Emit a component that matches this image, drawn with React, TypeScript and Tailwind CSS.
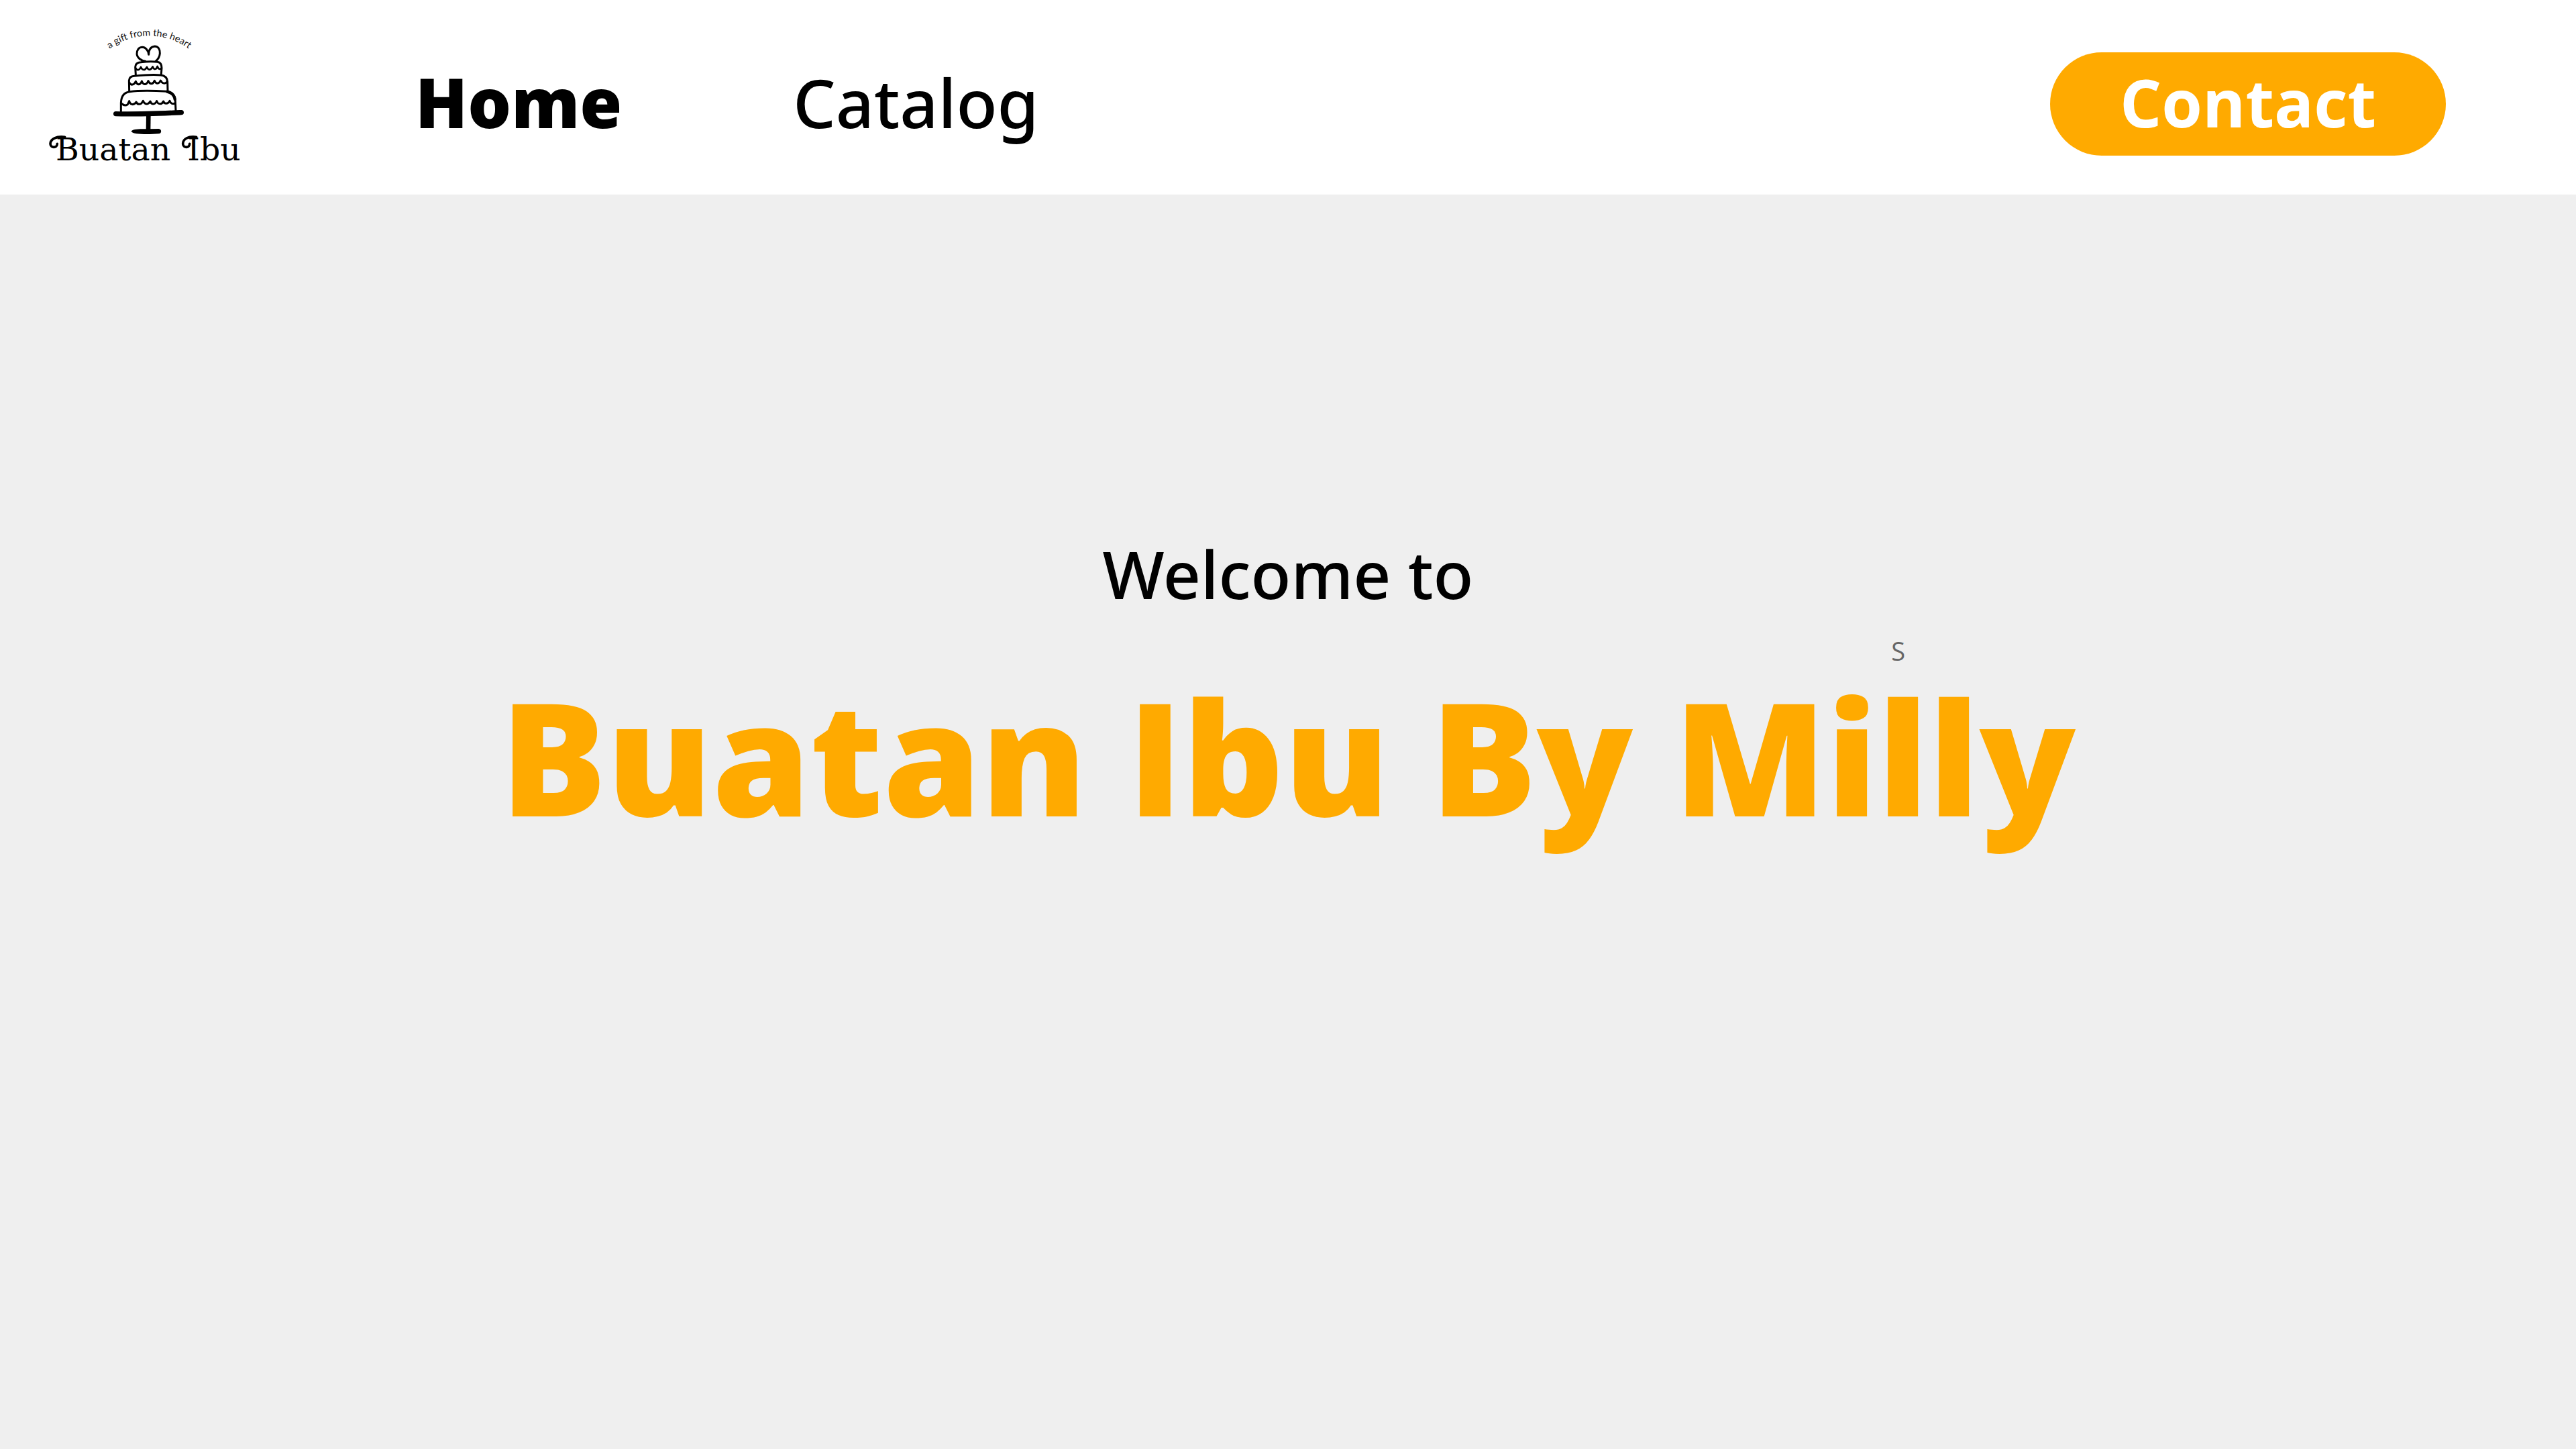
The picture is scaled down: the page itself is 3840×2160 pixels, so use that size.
function Logo() {
  return (
    <svg viewBox="48 30 900 690" className="h-[230px] w-[300px]" role="img" aria-label="Buatan Ibu, a gift from the heart">
      <defs>
        <path id="tagline-arc" d="M322 173A298 298 0 0 1 712 173" />
      </defs>
      <text fill="#111" className="font-['Lato'] text-[43px]" textAnchor="middle">
        <textPath href="#tagline-arc" startOffset="50%">a gift from the heart</textPath>
      </text>
      <g fill="none" stroke="#000" strokeLinecap="round" strokeLinejoin="round">
        {/* heart topper */}
        <path strokeWidth="9" d="M515 184C513 165 501 152 487 151C470 151 461 165 462 182C464 199 480 211 500 214M515 184C514 164 524 148 542 147C559 147 566 162 565 179C564 194 556 206 546 214" />
        {/* tiers */}
        <path strokeWidth="9" d="M457 274L455 240C455 226 464 219 480 218C505 215 535 214 554 217C568 219 573 230 573 244L571 271" />
        <path strokeWidth="9" d="M428 347L427 300C428 287 434 281 450 280C490 276 535 273 568 276C590 278 598 289 599 305L600 345" />
        <path strokeWidth="9" d="M391 438L391 400C392 368 405 353 430 350C480 344 545 346 595 349C622 352 633 366 634 392L636 434" />
        <path strokeWidth="13" d="M598 350C618 354 629 364 632 384" />
        {/* icing */}
        <path strokeWidth="8" d="M458 246C462 255 472 257 480 240C487 256 498 256 507 240C514 256 524 255 533 238C538 253 548 253 554 237C558 249 565 252 571 246" />
        <path strokeWidth="9" d="M429 310C435 322 449 322 457 304C463 322 477 322 484 303C492 322 505 321 513 302C520 319 534 318 541 301C548 317 561 316 568 300C576 315 589 316 597 306" />
        <path strokeWidth="9" d="M395 404C402 411 412 413 421 407L428 392C432 410 450 412 459 396C466 411 482 409 490 391C496 409 513 409 522 393C527 409 544 409 551 392C556 408 573 409 581 393C585 406 601 407 609 391C613 404 624 407 633 401" />
        {/* cake stand */}
        <path strokeWidth="22" d="M368 449C460 452 570 447 661 443" />
        <path strokeWidth="20" strokeLinecap="butt" d="M514 450L513 525" />
      </g>
      <path d="M437 528C440 516 475 516 512 517L560 516C574 517 574 538 560 538C520 541 445 543 437 528Z" />
      <text x="99" y="658" className="font-['DejaVu_Serif'] text-[142px]">Buatan</text>
      <text x="688" y="658" className="font-['DejaVu_Serif'] text-[142px]">Ibu</text>
      {/* flourishes beside the capitals */}
      <g fill="none" stroke="#000" strokeWidth="11" strokeLinecap="round">
        <path d="M140 553C104 548 75 561 75 583C76 603 106 603 106 583" />
        <path d="M728 553C694 548 668 561 668 583C669 603 698 603 698 583" />
      </g>
    </svg>
  );
}

export default function App() {
  return (
    <div className="flex min-h-screen flex-col bg-[#efefef] font-['Open_Sans',sans-serif] text-black">
      <header className="flex h-[290px] items-center bg-white pr-[194px] pl-[66px]">
        <a href="#home" className="shrink-0">
          <Logo />
        </a>
        <nav className="mt-[14px] ml-[253px] flex items-baseline gap-[255px] leading-none">
          <a href="#home" className="text-[102px] font-extrabold">Home</a>
          <a href="#catalog" className="font-['Noto_Sans',sans-serif] text-[100px] font-medium">Catalog</a>
        </nav>
        <button
          type="button"
          className="mt-5 ml-auto h-[154px] w-[590px] rounded-full bg-[#ffaa00] pb-[6px] text-[98px] leading-none font-bold text-white"
        >
          Contact
        </button>
      </header>
      <main className="flex flex-1 flex-col items-center pt-[497px]">
        <p className="font-['Noto_Sans',sans-serif] text-[98px] leading-[136px] font-medium">Welcome to</p>
        <div className="mt-5">
          <p className="pr-[254px] text-right text-[38px] leading-[54px] text-[#666]">S</p>
          <h1 className="mt-3 text-[235px] leading-none font-extrabold whitespace-nowrap text-[#ffaa00]">
            Buatan Ibu By Milly
          </h1>
        </div>
      </main>
    </div>
  );
}
